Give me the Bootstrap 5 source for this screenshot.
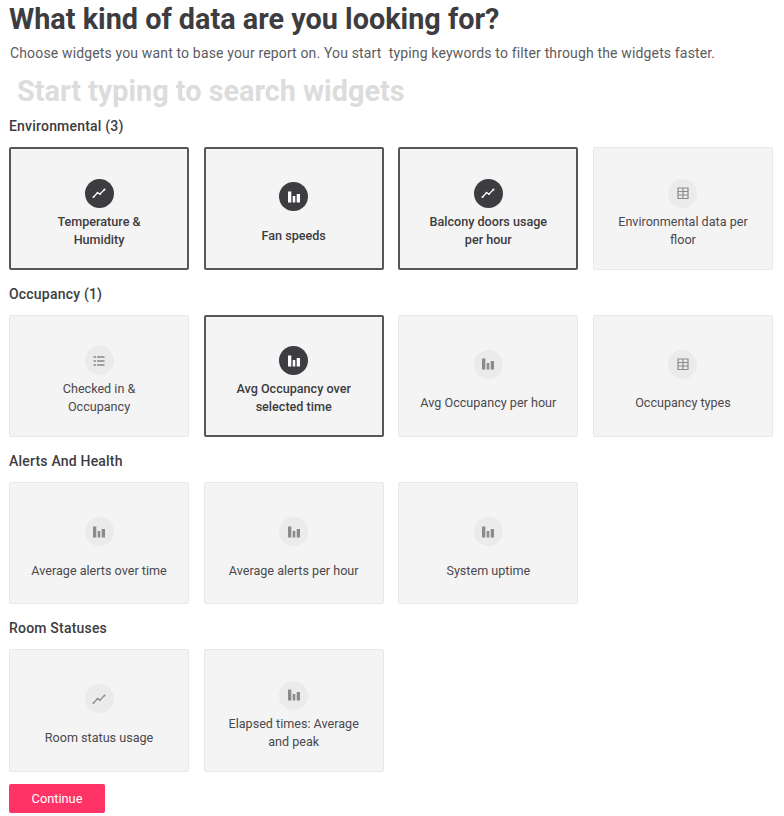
<!DOCTYPE html>
<html lang="en">

<head>
  <meta charset="UTF-8" />
  <meta name="viewport" content="width=device-width, initial-scale=1">
  <title>Report widgets</title>
  <link href="https://cdn.jsdelivr.net/npm/bootstrap@5.3.3/dist/css/bootstrap.min.css" rel="stylesheet" />
  <style>
    body { font-family: Roboto, "Liberation Sans", sans-serif; color: #3d3c40; background: #fff; overflow: hidden; }
    .page-wrap { padding: 0 11px 0 9px; }
    .page-title { font-size: 28.8px; font-weight: 700; line-height: 38px; margin: 0; color: #3d3c40; }
    .page-sub { font-size: 14px; line-height: 20px; margin: 5px 0 0 1px; color: #5c5b60; letter-spacing: .15px; }
    .search-input { display: block; width: 100%; border: 0; outline: 0; padding: 0 0 0 8px; margin-top: 10px; height: 38px; font-size: 28.8px; font-weight: 700; color: #3d3c40; background: transparent; }
    .search-input::placeholder { color: #dcdcdc; opacity: 1; }
    .widget-groups { margin-top: 5.2px; }
    .group-title { font-size: 14px; font-weight: 500; line-height: 20px; margin: 0 0 11px; color: #3d3c40; letter-spacing: .2px; }
    .widget-grid { display: grid; grid-template-columns: repeat(4, 1fr); column-gap: 14.6px; margin-bottom: 14px; }
    .widget-tile { height: 122.4px; background: #f4f4f4; border: 1px solid #e8e8e8; border-radius: 2px; padding: 30.6px 20.5px 0; font-size: 12.6px; line-height: 18px; color: #4a494e; text-align: center; }
    .widget-tile.picked { border: 2px solid #57565a; padding: 29.6px 20.5px 0; font-weight: 500; color: #3d3c40; }
    .widget-tile.single-line { padding-top: 34.1px; }
    .widget-tile.picked.single-line { padding-top: 33.1px; }
    .tile-icon { width: 29px; height: 29px; margin-bottom: 5px; border-radius: 50%; background: #ebebeb; color: #8b8b8b; }
    .single-line .tile-icon { margin-bottom: 15.5px; }
    .picked .tile-icon { background: #3d3c40; color: #fff; }
    .btn-continue { width: 96px; height: 29px; padding: 0; margin-top: -2px; font-size: 12.8px; color: #fff; background: #ff3366; border: 0; border-radius: 2px; }
    .btn-continue:hover { background: #f02a5c; color: #fff; }
  </style>
</head>

<body>

  <svg width="0" height="0" class="position-absolute">
    <symbol id="i-line" viewBox="0 0 14 14">
      <path d="M1.500 11 5.500 6.800 8 8 12.500 3.500" fill="none" stroke="currentColor" stroke-width="1.200"/>
      <circle cx="1.500" cy="11" r="1"/><circle cx="5.500" cy="6.800" r="1"/><circle cx="8" cy="8" r="1"/><circle cx="12.500" cy="3.500" r="1"/>
    </symbol>
    <symbol id="i-bars" viewBox="0 0 14 14"><path d="M1 1.500h3.300v11H1zM5.700 6h2.600v6.500H5.700zM9.700 4h3.300v8.500H9.700z" fill="currentColor"/></symbol>
    <symbol id="i-table" viewBox="0 0 14 14"><path d="M2 2h10v10.500H2zM2 5.500h10M2 9h10M7 2v10.500" fill="none" stroke="currentColor" stroke-width="1.200"/></symbol>
    <symbol id="i-list" viewBox="0 0 14 14"><path d="M1.500 3h2.500M5 3h7.500M1.500 7h2.500M5 7h7.500M1.500 11h2.500M5 11h7.500" fill="none" stroke="currentColor" stroke-width="1.300"/></symbol>
  </svg>

  <div class="page-wrap">
    <h1 class="page-title">What kind of data are you looking for?</h1>
    <p class="page-sub">Choose widgets you want to base your report on. You start&nbsp; typing keywords to filter through the widgets faster.</p>
    <input type="text" class="search-input" placeholder="Start typing to search widgets" />

    <div id="groups" class="widget-groups"></div>

    <button class="btn btn-continue">Continue</button>
  </div>

  <script src="https://cdn.jsdelivr.net/npm/bootstrap@5.3.3/dist/js/bootstrap.bundle.min.js"></script>
  <script>
    const grupos = [
      { nome: 'Environmental (3)', itens: [
        ['Temperature &amp; Humidity', 'line', 1],
        ['Fan speeds', 'bars', 1],
        ['Balcony doors usage per hour', 'line', 1],
        ['Environmental data per floor', 'table', 0]
      ] },
      { nome: 'Occupancy (1)', itens: [
        ['Checked in &amp; Occupancy', 'list', 0],
        ['Avg Occupancy over selected time', 'bars', 1],
        ['Avg Occupancy per hour', 'bars', 0],
        ['Occupancy types', 'table', 0]
      ] },
      { nome: 'Alerts And Health', itens: [
        ['Average alerts over time', 'bars', 0],
        ['Average alerts per hour', 'bars', 0],
        ['System uptime', 'bars', 0]
      ] },
      { nome: 'Room Statuses', itens: [
        ['Room status usage', 'line', 0],
        ['Elapsed times: Average and peak', 'bars', 0]
      ] }
    ];

    document.getElementById('groups').innerHTML = grupos.map(g => `
      <h2 class="group-title">${g.nome}</h2>
      <div class="widget-grid">
        ${g.itens.map(([nome, icone, marcado]) => `
          <div class="widget-tile d-flex flex-column align-items-center ${marcado ? 'picked' : ''}">
            <span class="tile-icon d-flex align-items-center justify-content-center flex-shrink-0">
              <svg width="14" height="14" fill="currentColor"><use href="#i-${icone}"/></svg>
            </span>
            <span class="tile-label">${nome}</span>
          </div>`).join('')}
      </div>`).join('');

    // tiles with one line of text sit lower
    document.querySelectorAll('.tile-label').forEach(el => {
      if (el.offsetHeight < 30) el.parentElement.classList.add('single-line');
    });
  </script>
</body>

</html>
